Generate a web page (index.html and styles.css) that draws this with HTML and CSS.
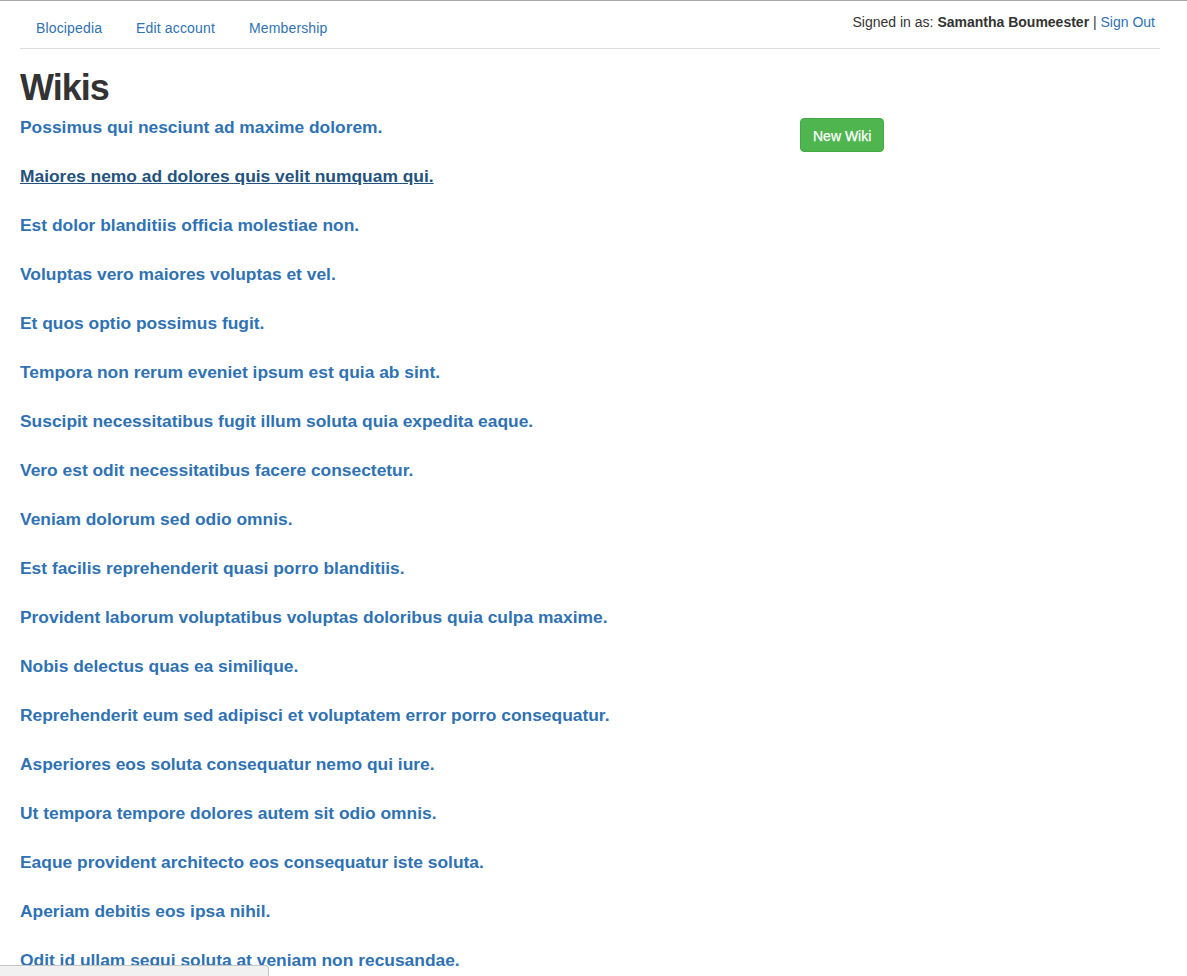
FILE: index.html
```html
<!DOCTYPE html>
<html>
<head>
<meta charset="utf-8">
<title>Blocipedia</title>
<link rel="stylesheet" href="styles.css">
</head>
<body>
<div class="container">
  <div class="navbar">
    <ul class="tabs">
      <li><a href="#">Blocipedia</a></li>
      <li><a href="#">Edit account</a></li>
      <li><a href="#">Membership</a></li>
    </ul>
    <div class="user-info">Signed in as: <strong>Samantha Boumeester</strong> | <a href="#">Sign Out</a></div>
  </div>
  <h1 class="title">Wikis</h1>
  <div class="row">
    <div class="col-main">
      <div class="wiki"><a href="#">Possimus qui nesciunt ad maxime dolorem.</a></div>
      <div class="wiki"><a href="#" class="hover">Maiores nemo ad dolores quis velit numquam qui.</a></div>
      <div class="wiki"><a href="#">Est dolor blanditiis officia molestiae non.</a></div>
      <div class="wiki"><a href="#">Voluptas vero maiores voluptas et vel.</a></div>
      <div class="wiki"><a href="#">Et quos optio possimus fugit.</a></div>
      <div class="wiki"><a href="#">Tempora non rerum eveniet ipsum est quia ab sint.</a></div>
      <div class="wiki"><a href="#">Suscipit necessitatibus fugit illum soluta quia expedita eaque.</a></div>
      <div class="wiki"><a href="#">Vero est odit necessitatibus facere consectetur.</a></div>
      <div class="wiki"><a href="#">Veniam dolorum sed odio omnis.</a></div>
      <div class="wiki"><a href="#">Est facilis reprehenderit quasi porro blanditiis.</a></div>
      <div class="wiki"><a href="#">Provident laborum voluptatibus voluptas doloribus quia culpa maxime.</a></div>
      <div class="wiki"><a href="#">Nobis delectus quas ea similique.</a></div>
      <div class="wiki"><a href="#">Reprehenderit eum sed adipisci et voluptatem error porro consequatur.</a></div>
      <div class="wiki"><a href="#">Asperiores eos soluta consequatur nemo qui iure.</a></div>
      <div class="wiki"><a href="#">Ut tempora tempore dolores autem sit odio omnis.</a></div>
      <div class="wiki"><a href="#">Eaque provident architecto eos consequatur iste soluta.</a></div>
      <div class="wiki"><a href="#">Aperiam debitis eos ipsa nihil.</a></div>
      <div class="wiki last"><a href="#">Odit id ullam sequi soluta at veniam non recusandae.</a></div>
    </div>
    <div class="col-side">
      <a href="#" class="btn-success">New Wiki</a>
    </div>
  </div>
</div>
<div class="statusbar"></div>
</body>
</html>
```
FILE: styles.css
```css
html, body {
  margin: 0;
  padding: 0;
  height: 100%;
  overflow: hidden;
}
body {
  font-family: "Liberation Sans", Arial, Helvetica, sans-serif;
  font-size: 14px;
  line-height: 1.42857;
  color: #333;
  background: #fff;
  border-top: 1px solid #a9a9a9;
  box-sizing: border-box;
}
a {
  color: #2f72b3;
  text-decoration: none;
}
.container {
  padding: 0 27px 0 20px;
}
.navbar {
  display: flex;
  justify-content: space-between;
  align-items: flex-start;
  border-bottom: 1px solid #ddd;
  height: 47px;
}
.tabs {
  list-style: none;
  margin: 0;
  padding: 8px 0 0 0;
  display: flex;
}
.tabs li {
  margin-right: 2px;
}
.tabs a {
  display: block;
  padding: 10px 16px 10px 16px;
  font-size: 14px;
  letter-spacing: 0.15px;
}
.user-info {
  padding-top: 12px;
  padding-right: 5px;
  font-size: 14px;
  color: #333;
}
.user-info strong {
  font-weight: bold;
}
.title {
  font-size: 36px;
  font-weight: bold;
  letter-spacing: -1px;
  line-height: 1.1;
  margin: 19px 0 10px 0;
  color: #333;
}
.row {
  display: flex;
}
.col-main {
  width: 780px;
}
.wiki {
  height: 49px;
  font-size: 17.4px;
  font-weight: bold;
  line-height: 19px;
}
.wiki.last {
  height: auto;
}
.wiki a.hover {
  color: #23527c;
  text-decoration: underline;
}
.btn-success {
  display: inline-block;
  box-sizing: border-box;
  height: 34px;
  padding: 7px 12px;
  font-size: 14px;
  line-height: 20px;
  color: #fff;
  background: #4fb54f;
  border: 1px solid #46a946;
  border-radius: 4px;
  -webkit-text-stroke: 0.25px #fff;
}
.statusbar {
  position: fixed;
  left: 0;
  bottom: -10px;
  width: 268px;
  height: 19px;
  background: #f1f1f1;
  border: 1px solid #c6c6c6;
  border-left: none;
  border-top-right-radius: 4px;
}
```
